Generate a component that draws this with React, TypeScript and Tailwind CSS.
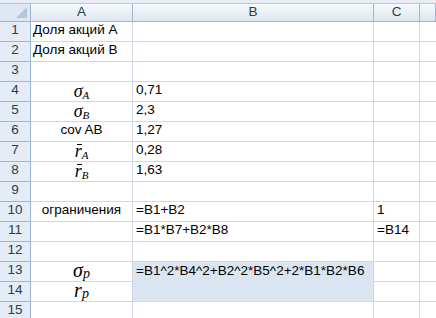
import React from 'react';

type Row = {
  n: number;
  a?: React.ReactNode;
  b?: React.ReactNode;
  c?: React.ReactNode;
  sel?: boolean;
};

const Sym: React.FC<{ base: string; sub: string; bar?: boolean; big?: boolean }> = ({ base, sub, bar, big }) => (
  <span className={`font-['Liberation_Serif',serif] italic leading-none ${big ? 'text-[20px]' : 'text-[18px]'}`}>
    <span className="relative">
      {bar && <span className="absolute left-[2px] right-[0px] top-[3px] h-[1px] bg-black"></span>}
      {base}
    </span>
    <sub className={`${big ? 'text-[14px]' : 'text-[11px]'} relative ${big ? 'top-[1px]' : 'top-[2px]'} align-baseline`}>{sub}</sub>
  </span>
);

const rows: Row[] = [
  { n: 1, a: 'Доля акций А' },
  { n: 2, a: 'Доля акций В' },
  { n: 3 },
  { n: 4, a: <Sym base="σ" sub="A" />, b: '0,71' },
  { n: 5, a: <Sym base="σ" sub="B" />, b: '2,3' },
  { n: 6, a: 'cov AB', b: '1,27' },
  { n: 7, a: <Sym base="r" sub="A" bar />, b: '0,28' },
  { n: 8, a: <Sym base="r" sub="B" bar />, b: '1,63' },
  { n: 9 },
  { n: 10, a: 'ограничения', b: '=B1+B2', c: '1' },
  { n: 11, b: '=B1*B7+B2*B8', c: '=B14' },
  { n: 12 },
  { n: 13, a: <Sym base="σ" sub="p" big />, b: '=B1^2*B4^2+B2^2*B5^2+2*B1*B2*B6', sel: true },
  { n: 14, a: <Sym base="r" sub="p" big />, sel: true },
  { n: 15 },
];

const hdr = 'h-[18px] flex items-center justify-center border-r border-b border-[#9eb6ce] bg-gradient-to-b from-[#f6f9fd] to-[#dfe7f2] text-[#27413e]';

export default function App() {
  return (
    <div className="w-[436px] h-[318px] overflow-hidden bg-white font-['Liberation_Sans',sans-serif] text-[13.5px] text-black">
      <div className="h-[4px] bg-[#e6edf6] border-b border-[#b7c8dd]"></div>
      <div className="grid grid-cols-[31px_102px_241px_46px_1fr]">
        <div className={`${hdr} relative bg-none bg-[#dfe7f2]`}>
          <span className="absolute right-[3px] bottom-[3px] w-0 h-0 border-l-[11px] border-l-transparent border-b-[11px] border-b-[#b4c6dd]"></span>
        </div>
        <div className={hdr}>A</div>
        <div className={hdr}>B</div>
        <div className={hdr}>C</div>
        <div className={hdr}></div>

        {rows.map((r) => {
          const first = r.n === 1 || r.n === 2;
          return (
            <React.Fragment key={r.n}>
              <div className="h-[20px] flex items-end justify-center pb-[1px] border-r border-b border-[#9eb6ce] bg-[#e4ecf7] text-[#27413e]">
                {r.n}
              </div>
              <div className={`h-[20px] flex items-end pb-[1px] border-r border-b border-[#d0d7e5] whitespace-nowrap ${first ? 'justify-start pl-[2px]' : 'justify-center'} ${r.n === 13 ? 'items-center' : ''}`}>
                {r.a}
              </div>
              <div className={`h-[20px] flex items-end pl-[3px] pb-[1px] border-r border-[#d0d7e5] whitespace-nowrap ${r.sel ? 'bg-[#dbe5f1]' : ''} ${r.n === 13 ? 'border-b-0' : 'border-b'}`}>
                {r.b}
              </div>
              <div className="h-[20px] flex items-end pl-[3px] pb-[1px] border-r border-b border-[#d0d7e5]">
                {r.c}
              </div>
              <div className="h-[20px] border-b border-[#d0d7e5]"></div>
            </React.Fragment>
          );
        })}
      </div>
    </div>
  );
}
